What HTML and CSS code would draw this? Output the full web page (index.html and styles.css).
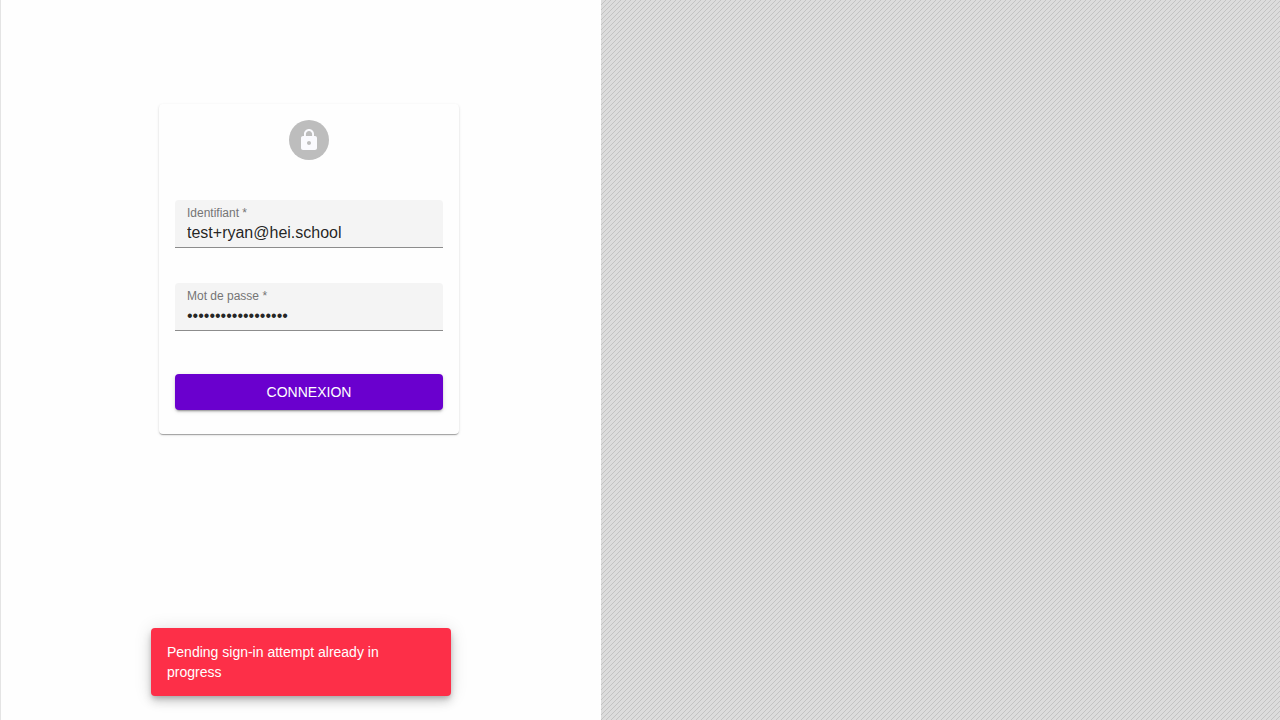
FILE: index.html
```html
<!DOCTYPE html>
<html lang="fr">
<head>
<meta charset="utf-8">
<meta name="viewport" content="width=device-width, initial-scale=1">
<title>Connexion</title>
<link rel="stylesheet" href="styles.css">
</head>
<body>
<div class="page">
  <main class="login">
    <form class="card">
      <div class="avatar">
        <svg class="avatar-icon" viewBox="0 0 24 24" aria-hidden="true"><path d="M18 8h-1V6c0-2.760-2.240-5-5-5S7 3.240 7 6v2H6c-1.100 0-2 .9-2 2v10c0 1.100.9 2 2 2h12c1.100 0 2-.9 2-2V10c0-1.100-.9-2-2-2zm-6 9c-1.100 0-2-.9-2-2s.9-2 2-2 2 .9 2 2-.9 2-2 2zm3.100-9H8.900V6c0-1.710 1.390-3.100 3.100-3.100 1.710 0 3.100 1.390 3.100 3.100v2z"/></svg>
      </div>
      <div class="field">
        <label class="field-label" for="username">Identifiant *</label>
        <input class="field-input" id="username" type="text" value="test+ryan@hei.school">
      </div>
      <div class="field">
        <label class="field-label" for="password">Mot de passe *</label>
        <input class="field-input" id="password" type="password" value="aaaaaaaaaaaaaaaaaa">
      </div>
      <button class="submit" type="button">CONNEXION</button>
    </form>
    <div class="toast" role="alert">Pending sign-in attempt already in progress</div>
  </main>
  <div class="backdrop"></div>
</div>
</body>
</html>
```
FILE: styles.css
```css
* {
  box-sizing: border-box;
}

body {
  margin: 0;
  font-family: "Liberation Sans", Arial, sans-serif;
  color: rgba(0, 0, 0, 0.87);
  background: #fefefe;
}

.page {
  display: grid;
  grid-template-columns: 601fr 679fr;
  min-height: 100vh;
}

.login {
  position: relative;
  display: flex;
  justify-content: center;
  align-items: flex-start;
  padding: 104px 0 24px 16px;
  border-left: 1px solid #e4e4e4;
}

.card {
  display: flex;
  flex-direction: column;
  width: 300px;
  padding: 16px 16px 24px;
  border-radius: 4px;
  background: #fefefe;
  box-shadow: 0 2px 1px -1px rgba(0, 0, 0, 0.2), 0 1px 1px rgba(0, 0, 0, 0.14), 0 1px 3px rgba(0, 0, 0, 0.12);
}

.avatar {
  display: flex;
  align-items: center;
  justify-content: center;
  align-self: center;
  width: 40px;
  height: 40px;
  margin-bottom: 40px;
  border-radius: 50%;
  background: #bdbdbd;
}

.avatar-icon {
  width: 24px;
  height: 24px;
  fill: #fafafe;
}

.field {
  display: flex;
  flex-direction: column;
  margin-bottom: 35px;
  padding: 6px 12px 2px;
  border-bottom: 1px solid #8c8c8c;
  border-radius: 4px 4px 0 0;
  background: #f4f4f4;
}

.field-label {
  font-size: 12px;
  line-height: 14px;
  color: #757575;
}

.field-input {
  width: 100%;
  height: 25px;
  padding: 0;
  border: 0;
  outline: 0;
  background: transparent;
  font-family: inherit;
  font-size: 16px;
  color: rgba(0, 0, 0, 0.87);
}

.submit {
  height: 36px;
  margin-top: 8px;
  padding: 0 16px;
  border: 0;
  border-radius: 4px;
  background: #6a00ce;
  color: #fff;
  font-family: inherit;
  font-size: 14px;
  box-shadow: 0 3px 1px -2px rgba(0, 0, 0, 0.2), 0 2px 2px rgba(0, 0, 0, 0.14), 0 1px 5px rgba(0, 0, 0, 0.12);
}

.toast {
  position: absolute;
  bottom: 24px;
  left: 50%;
  width: 300px;
  padding: 14px 16px;
  transform: translateX(-50%);
  border-radius: 4px;
  background: #fd2f48;
  color: #fff;
  font-size: 14px;
  line-height: 20px;
  box-shadow: 0 3px 5px -1px rgba(0, 0, 0, 0.2), 0 6px 10px rgba(0, 0, 0, 0.14), 0 1px 18px rgba(0, 0, 0, 0.12);
}

.backdrop {
  background-image: linear-gradient(135deg, #dcdcdc 45%, #c3c3c3 45%, #c3c3c3 55%, #dcdcdc 55%);
  background-size: 5px 5px;
}
```
